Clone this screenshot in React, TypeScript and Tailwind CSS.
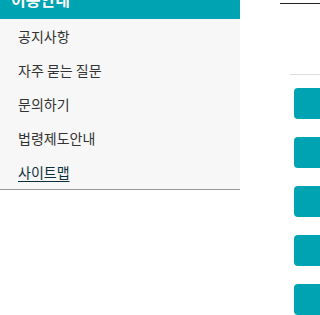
const menu = ['공지사항', '자주 묻는 질문', '문의하기', '법령제도안내'];

const App = () => {
	return (
		<div className="w-[320px] h-[315px] overflow-hidden bg-white flex font-['Noto_Sans_CJK_KR','Noto_Sans',sans-serif]">
			<nav className="w-[240px] shrink-0 self-start">
				<div className="h-[19px] bg-[#00a3b1] overflow-hidden pl-[11px]">
					<p className="-mt-[13px] text-[16px] leading-[24px] font-bold text-white">
						이용안내
					</p>
				</div>
				<ul className="bg-[#f7f7f7] border-b border-[#9a9a9a] text-[14px] text-[#333333]">
					{menu.map((m) => (
						<li key={m} className="h-[34px] flex items-center pl-[18px]">
							{m}
						</li>
					))}
					<li className="h-[34px] flex items-center pl-[18px]">
						<a href="#" className="underline underline-offset-[3px] text-[#0b2f3a]">
							사이트맵
						</a>
					</li>
				</ul>
			</nav>
			<div className="flex-1 flex flex-col items-end">
				<div className="mt-[3px] w-[40px] h-[2px] bg-[#222222]" />
				<div className="mt-[70px] w-[30px] h-px bg-[#dddddd]" />
				<div className="mt-[14px] w-[26px] flex flex-col gap-[18px]">
					{[0, 1, 2, 3, 4].map((i) => (
						<div key={i} className="h-[31px] w-[34px] rounded-[4px] bg-[#00a3b1]" />
					))}
				</div>
			</div>
		</div>
	);
};

export default App;
